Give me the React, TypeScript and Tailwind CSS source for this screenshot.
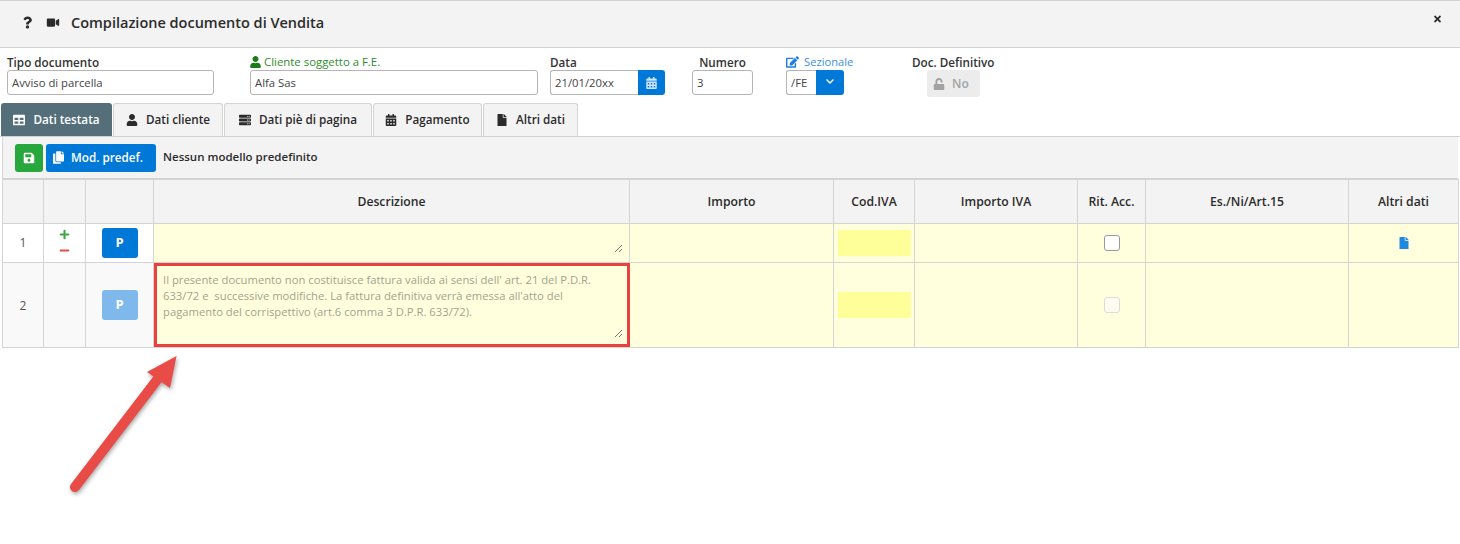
import React from "react";
import {
  FaCalendarAlt,
  FaChevronDown,
  FaCopy,
  FaEdit,
  FaFile,
  FaMinus,
  FaPlus,
  FaQuestion,
  FaSave,
  FaServer,
  FaTable,
  FaTimes,
  FaUnlock,
  FaUser,
  FaVideo,
} from "react-icons/fa";

const tabs = [
  { label: "Dati testata", icon: FaTable, width: "w-[111px]", active: true },
  { label: "Dati cliente", icon: FaUser, width: "w-[110px]" },
  { label: "Dati piè di pagina", icon: FaServer, width: "w-[148px]" },
  { label: "Pagamento", icon: FaCalendarAlt, width: "w-[109px]" },
  { label: "Altri dati", icon: FaFile, width: "w-[95px]" },
];

const columns = [
  { label: "", width: "w-[41px]" },
  { label: "", width: "w-[42px]" },
  { label: "", width: "w-[68px]" },
  { label: "Descrizione", width: "w-[476px]" },
  { label: "Importo", width: "w-[204px]" },
  { label: "Cod.IVA", width: "w-[81px]" },
  { label: "Importo IVA", width: "w-[163px]" },
  { label: "Rit. Acc.", width: "w-[68px]" },
  { label: "Es./Ni/Art.15", width: "w-[203px]" },
  { label: "Altri dati", width: "w-[110px]" },
];

const cellBorder = "border border-[#d4d4d4] p-0 align-middle";
const yellowCell = `${cellBorder} bg-[#ffffdd]`;
const inputStyle =
  "h-[25px] rounded-[3px] border border-[#b5b5b5] bg-white px-[4px] text-[11.3px] text-[#444] outline-none";

function Resizer() {
  return (
    <svg className="absolute bottom-[9px] right-[6px] h-[9px] w-[9px]" viewBox="0 0 9 9" stroke="#777" strokeWidth="1">
      <path d="M1 8 L8 1 M5 8 L8 5" />
    </svg>
  );
}

function Field({ label, className, children }: { label: React.ReactNode; className: string; children: React.ReactNode }) {
  return (
    <div className={`flex shrink-0 flex-col ${className}`}>
      <div className="mb-px flex h-[14px] items-center whitespace-nowrap text-[11.7px] font-semibold leading-[14px] text-[#333]">
        {label}
      </div>
      {children}
    </div>
  );
}

export default function App() {
  return (
    <div className="relative h-[544px] w-[1460px] overflow-hidden bg-white font-['Open_Sans',sans-serif] text-[#333]">
      {/* Header */}
      <div className="flex h-[48px] items-center border-y border-[#d2d2d2] bg-[#f3f3f3] pb-[3px] pl-[23px] pr-[18px]">
        <FaQuestion className="h-[13px] w-[9px] text-[#2b2b2b]" />
        <FaVideo className="ml-[14px] h-[11px] w-[14px] text-[#2b2b2b]" />
        <span className="ml-[11px] text-[14.5px] font-semibold text-[#2b2b2b]">Compilazione documento di Vendita</span>
        <FaTimes className="mb-[7px] ml-auto h-[10px] w-[9px] text-[#2b2b2b]" />
      </div>

      {/* Testata */}
      <div className="flex h-[55px] items-start pl-[7px] pt-[7px]">
        <Field label="Tipo documento" className="w-[207px]">
          <input readOnly value="Avviso di parcella" className={`${inputStyle} w-full`} />
        </Field>
        <Field
          label={
            <span className="flex items-center gap-[3px] text-[11.4px] font-normal text-[#2e8b2e]">
              <FaUser className="h-[12px] w-[11px] text-[#1c7c1c]" />
              Cliente soggetto a F.E.
            </span>
          }
          className="ml-[36px] w-[288px]"
        >
          <input readOnly value="Alfa Sas" className={`${inputStyle} w-full`} />
        </Field>
        <Field label="Data" className="ml-[12px] w-[115px]">
          <div className="flex">
            <input readOnly value="21/01/20xx" className={`${inputStyle} w-[88px] rounded-r-none border-r-0`} />
            <div className="flex h-[25px] w-[27px] items-center justify-center rounded-r-[3px] bg-[#0078d7]">
              <FaCalendarAlt className="h-[12px] w-[11px] text-[#cfe6fa]" />
            </div>
          </div>
        </Field>
        <Field label={<span className="w-full text-center">Numero</span>} className="ml-[27px] w-[61px]">
          <input readOnly value="3" className={`${inputStyle} w-full`} />
        </Field>
        <Field
          label={
            <span className="flex items-center gap-[5px] text-[11.2px] font-normal text-[#3b8fe0]">
              <FaEdit className="h-[12px] w-[13px] text-[#1f7ede]" />
              Sezionale
            </span>
          }
          className="ml-[33px] w-[66px]"
        >
          <div className="flex w-[58px]">
            <input readOnly value="/FE" className={`${inputStyle} w-[30px] rounded-r-none border-r-0 pl-[4px] pr-0`} />
            <div className="flex h-[25px] w-[28px] items-center justify-center rounded-r-[3px] bg-[#0078d7]">
              <FaChevronDown className="mb-[3px] h-[9px] w-[12px] text-white" />
            </div>
          </div>
        </Field>
        <Field label="Doc. Definitivo" className="ml-[60px] w-[84px]">
          <div className="ml-[15px] flex h-[27px] w-[53px] items-center gap-[7px] rounded-[3px] bg-[#ececec] pl-[6px] text-[12px] font-semibold text-[#a3a3a3]">
            <FaUnlock className="h-[12px] w-[12px]" />
            No
          </div>
        </Field>
      </div>

      {/* Tabs */}
      <div className="flex h-[34px] gap-px border-b border-[#d0d0d0] pl-px">
        {tabs.map((tab) => (
          <div
            key={tab.label}
            className={`flex h-[33px] items-center justify-center gap-[8px] rounded-t-[3px] text-[11.7px] font-semibold ${tab.width} ${
              tab.active ? "bg-[#546e7a] text-white" : "border border-b-0 border-[#d4d4d4] bg-[#f3f3f3] text-[#2b2b2b]"
            }`}
          >
            <tab.icon className={`h-[12px] w-[12px] ${tab.active ? "text-white" : "text-[#2b2b2b]"}`} />
            {tab.label}
          </div>
        ))}
      </div>

      {/* Toolbar */}
      <div className="ml-[2px] mr-[2px] flex h-[42px] items-center border-b border-l border-[#d4d4d4] bg-[#f3f3f3] pl-[12px]">
        <div className="flex h-[28px] w-[28px] items-center justify-center rounded-[3px] bg-[#28a73d]">
          <FaSave className="h-[12px] w-[12px] text-white" />
        </div>
        <div className="ml-[3px] flex h-[28px] w-[110px] items-center justify-center gap-[7px] rounded-[3px] bg-[#0078d7] pr-[6px] text-[11.7px] font-semibold text-white">
          <FaCopy className="h-[13px] w-[11px]" />
          Mod. predef.
        </div>
        <span className="mb-[2px] ml-[7px] text-[11.5px] font-semibold text-[#2b2b2b]">Nessun modello predefinito</span>
      </div>

      {/* Righe */}
      <table className="ml-[2px] w-[1456px] table-fixed border-collapse text-[12px]">
        <thead>
          <tr className="h-[44px] bg-[#f3f3f3]">
            {columns.map((col, i) => (
              <th key={i} className={`${cellBorder} ${col.width} pt-[2px] text-center text-[12.2px] font-semibold text-[#2b2b2b]`}>
                {col.label}
              </th>
            ))}
          </tr>
        </thead>
        <tbody>
          <tr className="h-[39px]">
            <td className={`${cellBorder} text-center text-[#555]`}>1</td>
            <td className={cellBorder}>
              <div className="flex flex-col items-center gap-[5px] pb-[1px]">
                <FaPlus className="h-[11px] w-[11px] text-[#3fa648]" />
                <FaMinus className="h-[11px] w-[11px] text-[#e2504a]" />
              </div>
            </td>
            <td className={cellBorder}>
              <div className="mx-auto flex h-[30px] w-[36px] items-center justify-center rounded-[3px] bg-[#0078d7] text-[13px] font-bold text-white">
                P
              </div>
            </td>
            <td className={`${yellowCell} relative`}>
              <Resizer />
            </td>
            <td className={yellowCell} />
            <td className={yellowCell}>
              <div className="mx-auto h-[26px] w-[73px] bg-[#ffff99]" />
            </td>
            <td className={yellowCell} />
            <td className={yellowCell}>
              <div className="mx-auto h-[16px] w-[16px] rounded-[3px] border border-[#999] bg-white" />
            </td>
            <td className={yellowCell} />
            <td className={`${yellowCell} text-center`}>
              <FaFile className="mx-auto h-[12px] w-[10px] text-[#1e88e5]" />
            </td>
          </tr>
          <tr className="h-[85px]">
            <td className={`${cellBorder} bg-[#f9f9f9] pt-[1px] text-center text-[#555]`}>2</td>
            <td className={`${cellBorder} bg-[#f9f9f9]`} />
            <td className={`${cellBorder} bg-[#f9f9f9]`}>
              <div className="mx-auto flex h-[30px] w-[36px] items-center justify-center rounded-[3px] bg-[#7fb8ea] text-[13px] font-bold text-white">
                P
              </div>
            </td>
            <td className={`${yellowCell} relative`}>
              <div className="absolute inset-0 -right-[1px] border-[3px] border-[#e8423f] px-[6px] pt-[6px] text-[11.25px] leading-[16px] text-[#a3a38f]">
                Il presente documento non costituisce fattura valida ai sensi dell' art. 21 del P.D.R.
                <br />
                633/72 e&nbsp; successive modifiche. La fattura definitiva verrà emessa all'atto del
                <br />
                pagamento del corrispettivo (art.6 comma 3 D.P.R. 633/72).
              </div>
              <Resizer />
            </td>
            <td className={yellowCell} />
            <td className={yellowCell}>
              <div className="mx-auto h-[26px] w-[73px] bg-[#ffff99]" />
            </td>
            <td className={yellowCell} />
            <td className={yellowCell}>
              <div className="mx-auto h-[16px] w-[16px] rounded-[3px] border border-[#dcdcd0] bg-[#fcfcf2]" />
            </td>
            <td className={yellowCell} />
            <td className={yellowCell} />
          </tr>
        </tbody>
      </table>

      {/* Freccia */}
      <svg
        className="absolute left-[60px] top-[345px] h-[160px] w-[130px] drop-shadow-[1px_2px_2px_rgba(0,0,0,0.35)]"
        viewBox="60 345 130 160"
      >
        <path d="M75 487 L160 376" stroke="#e94b47" strokeWidth="10" strokeLinecap="round" fill="none" />
        <path d="M176.5 356 L147 372 L170 388 Z" fill="#e94b47" />
      </svg>
    </div>
  );
}
